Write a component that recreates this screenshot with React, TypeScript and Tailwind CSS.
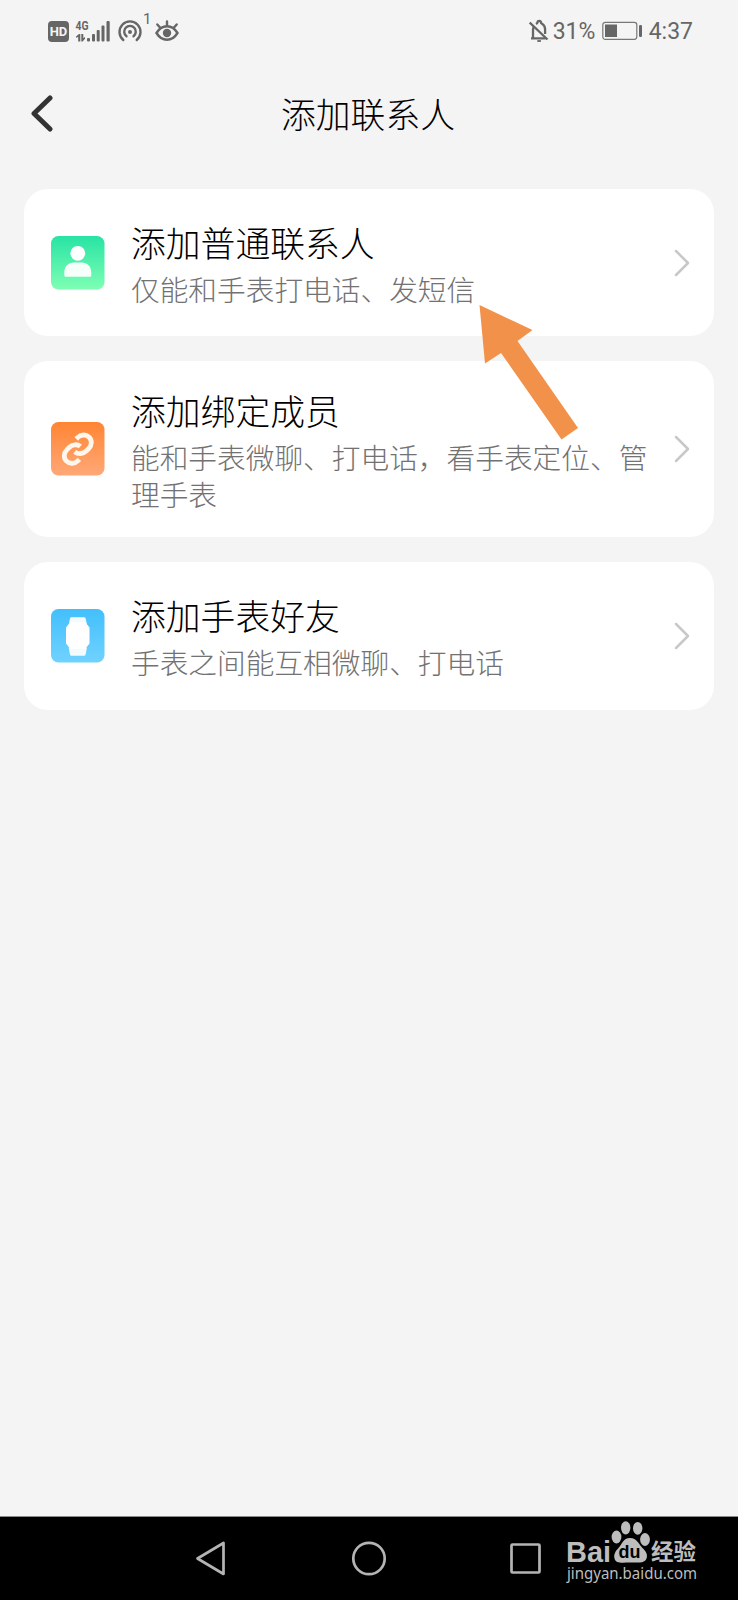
import type { ReactNode } from 'react'

interface Option {
  id: string
  title: string
  desc: string
  height: string
  icon: ReactNode
}

function PersonIcon() {
  return (
    <svg width="54" height="54" viewBox="0 0 54 54">
      <defs>
        <linearGradient id="green" x1="0" y1="0" x2="0" y2="1">
          <stop offset="0" stopColor="#28e3a4" />
          <stop offset="1" stopColor="#7dffb4" />
        </linearGradient>
      </defs>
      <rect width="53.5" height="53.5" rx="7.5" fill="url(#green)" />
      <circle cx="26.8" cy="17.3" r="7.4" fill="#fff" />
      <path d="M13.3 39.3v-2.8c0-6.2 4.2-10 9.7-10h7.6c5.500 0 9.700 3.800 9.700 10v2.800a1.500 1.500 0 0 1-1.500 1.500H14.800a1.500 1.500 0 0 1-1.500-1.500z" fill="#fff" fillOpacity=".94" />
    </svg>
  )
}

function LinkIcon() {
  return (
    <svg width="54" height="54" viewBox="0 0 54 54">
      <defs>
        <linearGradient id="orange" x1="0" y1="0" x2="0" y2="1">
          <stop offset="0" stopColor="#ff8533" />
          <stop offset="1" stopColor="#ffa877" />
        </linearGradient>
      </defs>
      <rect width="53.5" height="53.5" rx="7.5" fill="url(#orange)" />
      <g fill="none" stroke="#fff6ec" strokeWidth="4.8">
        <path d="M25.300 17l1.200-1.300c3.300-3.400 8.500-3.600 11.600-.5s2.900 8-.3 11.300l-2.300 2.300c-3.200 3.200-8.300 3.700-11.800 1" />
        <path d="M28.300 37.300l-1.200 1.300c-3.300 3.400-8.500 3.600-11.600.5s-2.900-8 .3-11.300l2.300-2.300c3.200-3.200 8.300-3.700 11.200-1" />
      </g>
    </svg>
  )
}

function WatchIcon() {
  return (
    <svg width="54" height="54" viewBox="0 0 54 54">
      <defs>
        <linearGradient id="blue" x1="0" y1="0" x2="0" y2="1">
          <stop offset="0" stopColor="#42bffc" />
          <stop offset="1" stopColor="#70d2ff" />
        </linearGradient>
      </defs>
      <rect width="53.5" height="53.5" rx="7.5" fill="url(#blue)" />
      <path d="M20.500 8.200h12.600a1.500 1.500 0 0 1 1.500 1.200l1.400 6H17.700l1.300-6a1.500 1.500 0 0 1 1.500-1.200zM17.700 38.500H36l-1.400 7a1.500 1.500 0 0 1-1.500 1.300H20.500a1.500 1.500 0 0 1-1.500-1.300z" fill="#f3fbff" />
      <path d="M19.500 13.500h14.500l4 5v16l-4 5H19.500l-4-5v-16z" fill="#fff" stroke="#fff" strokeLinejoin="round" />
    </svg>
  )
}

const options: Option[] = [
  { id: 'contact', title: '添加普通联系人', desc: '仅能和手表打电话、发短信', height: 'h-[147px]', icon: <PersonIcon /> },
  { id: 'member', title: '添加绑定成员', desc: '能和手表微聊、打电话，看手表定位、管理手表', height: 'h-[176px]', icon: <LinkIcon /> },
  { id: 'friend', title: '添加手表好友', desc: '手表之间能互相微聊、打电话', height: 'h-[148px]', icon: <WatchIcon /> },
]

function StatusBar() {
  return (
    <header className="flex h-[62px] items-center pl-12 pr-[45px] font-[Roboto,sans-serif] text-[#666]">
      <div className="flex h-[21px] w-[21px] items-center justify-center rounded-[4px] bg-[#666] text-[13px] font-bold leading-none text-[#f4f4f4]">
        HD
      </div>
      <svg width="36" height="24" viewBox="0 0 36 24" className="ml-[6px]" fill="#666">
        <text x="0.5" y="11" fontFamily="Roboto" fontSize="12.5" fontWeight="700" textLength="13" lengthAdjust="spacingAndGlyphs">4G</text>
        <path d="M1 17.500l3-2.500h1.300v7.500H3.200v-4.500L1 18.700zM6.300 15h2v4l1.700-1v1.700l-2.300 2.800H6.300z" />
        <rect x="12" y="19" width="3" height="3.5" rx="1" />
        <rect x="17" y="15" width="3" height="7.5" rx="1" />
        <rect x="21.7" y="11" width="3" height="11.5" rx="1" />
        <rect x="26.5" y="6.5" width="3" height="16" rx="1" />
        <rect x="31.5" y="2" width="3.2" height="20.5" rx="1" />
      </svg>
      <svg width="26" height="24" viewBox="0 0 26 24" className="ml-[6px]" fill="none" stroke="#666" strokeWidth="2.4" strokeLinecap="round">
        <path d="M6.300 21A10.500 10.500 0 1 1 19.700 21" />
        <path d="M9.500 17.300a5.800 5.800 0 1 1 7 0" />
        <circle cx="13" cy="13" r="2" fill="#666" stroke="none" />
      </svg>
      <span className="-mt-[24px] w-[8px] text-[15px] leading-none">1</span>
      <svg width="24" height="24" viewBox="0 0 24 24" className="ml-[4px]" fill="none" stroke="#666" strokeWidth="2.4" strokeLinecap="round">
        <path d="M1.500 14C7 5 17 5 22.500 14 17 23 7 23 1.500 14z" />
        <circle cx="12" cy="14" r="4.200" fill="#666" stroke="none" />
        <path d="M12 6.500V2.500M5 8.500L2.300 5.500M19 8.500l2.700-3" />
      </svg>

      <svg width="21" height="24" viewBox="0 0 21 24" className="ml-auto" fill="none" stroke="#666" strokeWidth="2.3">
        <path d="M.7 3.500L18.500 20.500" />
        <path d="M2 19.300h14.500M4 19V11q0-2 .8-3.200M7 5c.9-.6 1.500-.9 1.500-1.500 0-2.300 3.400-2.300 3.400 0 0 .6.600.9 1.500 1.500 1.900 1.200 2.700 3 2.700 5.500v4.500" />
        <path d="M8.300 22h3.600" strokeWidth="1.8" />
      </svg>
      <span className="ml-[3px] w-[44px] text-[23px] leading-none">31%</span>
      <svg width="41" height="20" viewBox="0 0 41 20" className="ml-[5px]">
        <rect x=".8" y="1.3" width="34" height="17" rx="2.5" fill="none" stroke="#777" strokeWidth="1.2" />
        <rect x="3" y="3.5" width="12" height="12.5" fill="#666" />
        <rect x="37" y="4" width="3" height="12" rx="1.2" fill="#666" />
      </svg>
      <span className="ml-[6px] text-[23px] leading-none">4:37</span>
    </header>
  )
}

function OptionCard({ option }: { option: Option }) {
  return (
    <button className={`flex w-full items-center rounded-[24px] bg-white pl-[27px] pr-[24px] text-left ${option.height}`}>
      <span className="shrink-0">{option.icon}</span>
      <span className="-mt-[2px] ml-[26px] block w-[520px] shrink-0">
        <span className="mb-[3px] block text-[34.8px] font-light leading-[50px] text-black">{option.title}</span>
        <span className="block text-[28.7px] font-light leading-[37px] text-[#727272]">{option.desc}</span>
      </span>
      <svg width="16" height="28" viewBox="0 0 16 28" className="ml-auto shrink-0">
        <path d="M2 2l12 12L2 26" fill="none" stroke="#c8c8c8" strokeWidth="2.5" strokeLinecap="round" strokeLinejoin="round" />
      </svg>
    </button>
  )
}

function Watermark() {
  return (
    <div className="absolute left-[566px] top-[4px] w-[134px]">
      <svg width="134" height="62" viewBox="0 0 134 62" fill="#bdbdbd">
        <text x="0" y="40.5" fontFamily="Liberation Sans" fontSize="29" fontWeight="700" textLength="45" lengthAdjust="spacingAndGlyphs">Bai</text>
        <ellipse cx="50.5" cy="16" rx="4.9" ry="6.4" />
        <ellipse cx="59.7" cy="6.8" rx="4.7" ry="6.6" />
        <ellipse cx="71.7" cy="7.3" rx="4.7" ry="6.4" />
        <ellipse cx="79" cy="18.5" rx="4.9" ry="6.4" />
        <path d="M64 17c7 0 9 6.500 12.500 10 3.500 3 5.500 7 4 10.500-2 5-8 4-16 4s-14.500 1.500-16-4c-1-4 1-7.500 4-10.500C56 23.500 57 17 64 17z" />
        <text x="52.5" y="36.5" fontFamily="Liberation Sans" fontSize="18" fontWeight="700" fill="#000" textLength="22" lengthAdjust="spacingAndGlyphs">du</text>
        <text x="85" y="38.5" fontFamily="Noto Sans CJK SC" fontSize="22.5" fontWeight="700">经验</text>
        <text x="1" y="58" fontFamily="Noto Sans" fontSize="15.5" textLength="130" lengthAdjust="spacingAndGlyphs">jingyan.baidu.com</text>
      </svg>
    </div>
  )
}

export default function App() {
  return (
    <div className="relative flex h-[1600px] w-[738px] flex-col overflow-hidden bg-[#f4f4f4] font-['Noto_Sans_CJK_SC',sans-serif]">
      <StatusBar />

      <div className="grid h-[104px] grid-cols-[100px_1fr_100px] items-center">
        <button aria-label="返回" className="pl-[29px]">
          <svg width="26" height="38" viewBox="0 0 26 38">
            <path d="M21 3L5 18.500 21 34" fill="none" stroke="#333" strokeWidth="5" strokeLinecap="round" strokeLinejoin="round" />
          </svg>
        </button>
        <h1 className="-mt-[2px] pr-[2px] text-center text-[34.8px] font-light leading-[50px] text-black">添加联系人</h1>
      </div>

      <main className="flex flex-1 flex-col gap-[25px] px-6 pt-[23px]">
        {options.map(o => <OptionCard key={o.id} option={o} />)}
      </main>

      {/* System navigation */}
      <nav className="relative h-[84px] shrink-0 border-t border-[#8a8a8a] bg-black">
        <div className="flex h-full items-center pl-[195px]">
          <svg width="32" height="36" viewBox="0 0 32 36">
            <path d="M28.500 2v31L2.500 17.500z" fill="none" stroke="#b4b4b4" strokeWidth="2.7" strokeLinejoin="round" />
          </svg>
          <svg width="36" height="36" viewBox="0 0 36 36" className="ml-[124px]">
            <circle cx="18" cy="17.5" r="15.7" fill="none" stroke="#b4b4b4" strokeWidth="2.7" />
          </svg>
          <svg width="34" height="36" viewBox="0 0 34 36" className="ml-[122px]">
            <rect x="2.5" y="3.5" width="28" height="28" rx="1" fill="none" stroke="#b4b4b4" strokeWidth="2.7" />
          </svg>
        </div>
        <Watermark />
      </nav>

      {/* Pointer over the first option */}
      <svg width="100" height="136" viewBox="0 0 100 136" className="absolute left-[479px] top-[304px]">
        <path d="M.5 1L53.500 26 38.500 37 99 124 82.500 135.500 22 49 6 59.500z" fill="#f2924a" />
      </svg>
    </div>
  )
}
